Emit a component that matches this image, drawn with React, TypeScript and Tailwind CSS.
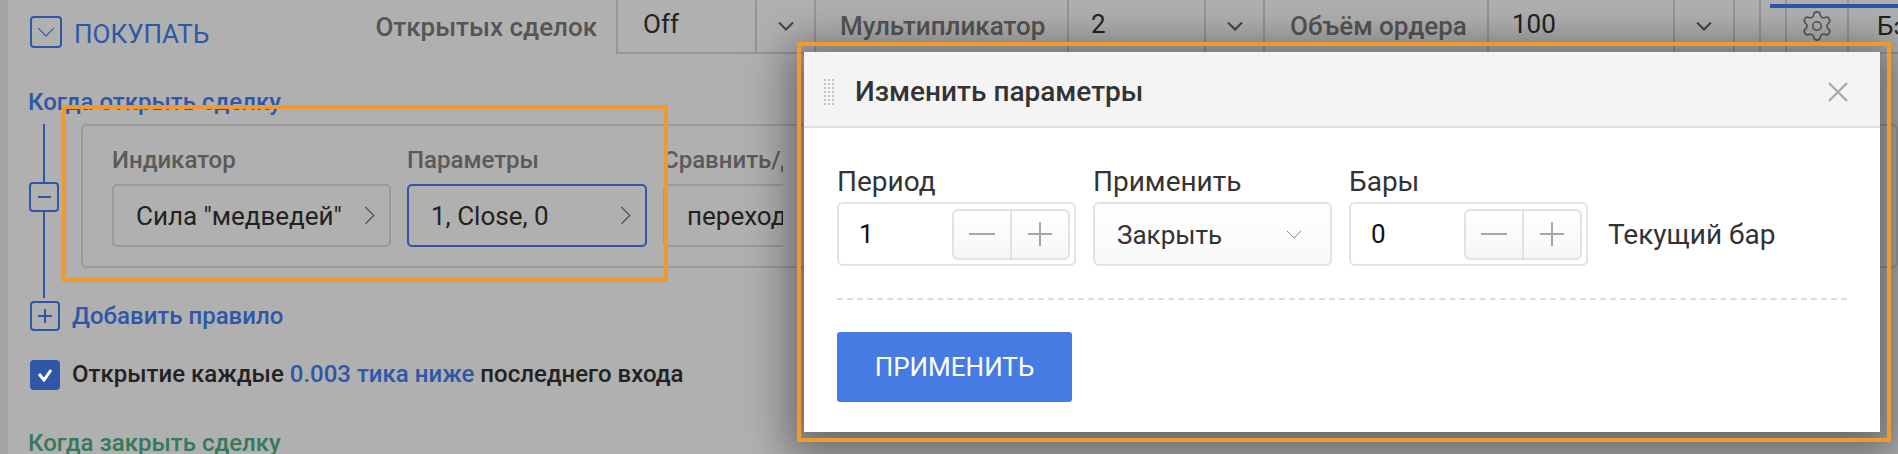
import { Settings } from "lucide-react";

function Chevron({ dir = "down", className }: { dir?: "down" | "right"; className: string }) {
  const d = dir === "down" ? "M1 1l7 7 7-7" : "M1 1l7 7-7 7";
  const box = dir === "down" ? "0 0 16 9" : "0 0 9 16";
  return (
    <svg viewBox={box} fill="none" stroke="currentColor" className={className}>
      <path d={d} />
    </svg>
  );
}

function HeaderCell({ width, border = true, children }: { width: string; border?: boolean; children?: React.ReactNode }) {
  return (
    <div className={`flex h-full shrink-0 items-center ${width} ${border ? "border-l-2 border-[#969696]" : ""}`}>
      {children}
    </div>
  );
}

function HeaderArrow({ width }: { width: string }) {
  return (
    <HeaderCell width={width}>
      <Chevron className="mx-auto h-[10px] w-[16px] stroke-2 text-[#444]" />
    </HeaderCell>
  );
}

function RuleSelect({ width, value, active, arrow = true }: { width: string; value: string; active?: boolean; arrow?: boolean }) {
  return (
    <div
      className={`flex h-[63px] shrink-0 items-center justify-between rounded-[5px] border-2 pl-[22px] pr-[14px] text-[26px] text-[#222] ${width} ${
        active ? "border-[#2e57a8]" : "border-[#9a9a9a]"
      }`}
    >
      <span className="mt-[2px] whitespace-nowrap">{value}</span>
      {arrow && <Chevron dir="right" className="h-[21px] w-[11px] shrink-0 text-[#555]" />}
    </div>
  );
}

function Stepper() {
  return (
    <div className="flex h-[51px] w-[118px] shrink-0 rounded-[6px] border-2 border-[#e2e2e2] bg-gradient-to-b from-white to-[#f6f6f6]">
      <div className="flex flex-1 items-center justify-center border-r-2 border-[#e2e2e2]">
        <div className="h-[2px] w-[26px] bg-[#a6a6a6]" />
      </div>
      <div className="flex flex-1 items-center justify-center">
        <svg viewBox="0 0 24 24" className="h-[24px] w-[24px]" stroke="#a6a6a6" strokeWidth="2">
          <path d="M0 12h24M12 0v24" />
        </svg>
      </div>
    </div>
  );
}

function NumberField({ value }: { value: string }) {
  return (
    <div className="flex h-[64px] w-[239px] items-center justify-between rounded-[6px] border-2 border-[#e2e2e2] pl-[20px] pr-[4px] text-[26px] text-[#111]">
      <span>{value}</span>
      <Stepper />
    </div>
  );
}

function Field({ label, children }: { label: string; children: React.ReactNode }) {
  return (
    <div className="w-[239px] shrink-0">
      <div className="mb-[4px] mt-[-1px] h-[31px] text-[28px] leading-[30px] text-[#333]">{label}</div>
      {children}
    </div>
  );
}

export default function App() {
  return (
    <div className="relative flex h-[454px] w-[1898px] overflow-hidden bg-[#b0b0b0] font-['Roboto',sans-serif]">
      <div className="w-[8px] shrink-0 bg-[#a4a4a4]" />

      <div className="flex min-w-0 flex-1 flex-col">
        {/* top toolbar */}
        <div className="relative flex h-[54px] shrink-0 text-[26px]">
          <div className="flex w-[608px] shrink-0 items-start pl-[22px] pt-[16px]">
            <div className="flex h-[32px] w-[32px] shrink-0 items-center justify-center rounded-[4px] border-2 border-[#2e57a8]">
              <Chevron className="h-[10px] w-[18px] text-[#2e57a8]" />
            </div>
            <span className="ml-[12px] mt-[1px] text-[26px] leading-[34px] text-[#2e57a8]">ПОКУПАТЬ</span>
            <span className="ml-[166px] mt-[-6px] whitespace-nowrap font-medium leading-[34px] text-[#555]">Открытых сделок</span>
          </div>
          <div className="flex h-full shrink-0 border-b-2 border-[#969696]">
            <HeaderCell width="w-[139px]">
              <span className="ml-[25px] mt-[-3px] text-[#222]">Off</span>
            </HeaderCell>
            <HeaderArrow width="w-[59px]" />
            <HeaderCell width="w-[253px]">
              <span className="ml-[24px] whitespace-nowrap font-medium text-[#555]">Мультипликатор</span>
            </HeaderCell>
            <HeaderCell width="w-[137px]">
              <span className="ml-[22px] mt-[-3px] text-[#222]">2</span>
            </HeaderCell>
            <HeaderArrow width="w-[59px]" />
            <HeaderCell width="w-[224px]">
              <span className="ml-[25px] whitespace-nowrap font-medium text-[#555]">Объём ордера</span>
            </HeaderCell>
            <HeaderCell width="w-[186px]">
              <span className="ml-[23px] mt-[-3px] text-[#222]">100</span>
            </HeaderCell>
            <HeaderArrow width="w-[60px]" />
            <HeaderCell width="w-[26px]" />
            <HeaderCell width="w-[26px]" />
            <HeaderCell width="w-[62px]">
              <Settings className="mx-auto h-[34px] w-[34px] text-[#555]" strokeWidth={1.1} />
            </HeaderCell>
            <HeaderCell width="w-[51px]">
              <span className="ml-[28px] whitespace-nowrap text-[#222]">Бэ</span>
            </HeaderCell>
          </div>
          <div className="absolute left-[1762px] right-0 top-[4px] h-[4px] bg-[#2e57a8]" />
        </div>

        {/* entry rules */}
        <div className="pl-[20px] pt-[34px]">
          <div className="text-[24px] font-medium leading-[28px] text-[#2e57a8]">Когда открыть сделку</div>

          <div className="flex">
            <div className="flex w-[32px] shrink-0 flex-col items-center pt-[8px]">
              <div className="h-[58px] w-[2px] bg-[#2e57a8]" />
              <div className="flex h-[30px] w-[30px] shrink-0 items-center justify-center rounded-[4px] border-2 border-[#2e57a8]">
                <div className="h-[2px] w-[13px] bg-[#2e57a8]" />
              </div>
              <div className="h-[86px] w-[2px] bg-[#2e57a8]" />
            </div>
            <div className="ml-[21px] mt-[8px] flex h-[144px] min-w-0 flex-1 gap-[16px] rounded-[5px] border-2 border-[#9a9a9a] pl-[29px]">
              <div className="pt-[19px]">
                <div className="mb-[9px] h-[30px] text-[24px] font-medium leading-[30px] text-[#5a5a5a]">Индикатор</div>
                <RuleSelect width="w-[279px]" value={'Сила "медведей"'} />
              </div>
              <div className="pt-[19px]">
                <div className="mb-[9px] h-[30px] text-[24px] font-medium leading-[30px] text-[#5a5a5a]">Параметры</div>
                <RuleSelect width="w-[240px]" value="1, Close, 0" active />
              </div>
              <div className="w-[120px] shrink-0 overflow-hidden pt-[19px]">
                <div className="mb-[9px] h-[30px] whitespace-nowrap text-[24px] font-medium leading-[30px] text-[#5a5a5a]">Сравнить/Де</div>
                <RuleSelect width="w-[279px]" value="переход" arrow={false} />
              </div>
            </div>
          </div>

          <div className="ml-[2px] flex items-center">
            <div className="flex h-[30px] w-[30px] items-center justify-center rounded-[4px] border-2 border-[#2e57a8]">
              <svg viewBox="0 0 14 14" className="h-[14px] w-[14px]" stroke="#2e57a8" strokeWidth="2">
                <path d="M0 7h14M7 0v14" />
              </svg>
            </div>
            <span className="ml-[12px] text-[24px] font-medium text-[#2e57a8]">Добавить правило</span>
          </div>

          <div className="ml-[2px] mt-[24px] flex items-center">
            <div className="flex h-[30px] w-[30px] items-center justify-center rounded-[4px] bg-[#2e57a8]">
              <svg viewBox="0 0 16 14" className="h-[14px] w-[16px]" fill="none" stroke="#fff" strokeWidth="3">
                <path d="M2 6l5 6 7-10" />
              </svg>
            </div>
            <span className="ml-[12px] mt-[-2px] whitespace-nowrap text-[24px] font-medium text-[#222]">
              Открытие каждые <span className="text-[#2e57a8]">0.003 тика ниже</span> последнего входа
            </span>
          </div>

          <div className="mt-[37px] text-[24px] font-medium leading-[28px] text-[#37795a]">Когда закрыть сделку</div>
        </div>
      </div>

      {/* highlight around the rule being edited */}
      <div className="absolute left-[62px] top-[105px] h-[177px] w-[606px] border-4 border-[#f2992e]" />

      {/* dialog */}
      <div className="absolute left-[804px] top-[52px] flex h-[380px] w-[1076px] flex-col bg-white shadow-[0_8px_40px_16px_rgba(0,0,0,0.4)]">
        <div className="flex h-[76px] shrink-0 items-center border-b-2 border-[#dedede] bg-[#f4f4f4] pl-[20px] pr-[32px] pt-[6px]">
          <svg viewBox="0 0 10 26" className="h-[26px] w-[10px]" fill="#c4c4c4">
            {[0, 4, 8, 12, 16, 20, 24].map((y) => (
              <g key={y}>
                <rect x="0" y={y} width="2" height="2" />
                <rect x="4" y={y} width="2" height="2" />
                <rect x="8" y={y} width="2" height="2" />
              </g>
            ))}
          </svg>
          <span className="ml-[21px] text-[28px] font-medium text-[#333]">Изменить параметры</span>
          <svg viewBox="0 0 20 20" className="ml-auto h-[20px] w-[20px]" stroke="#a3abb2" strokeWidth="2.4">
            <path d="M1 1l18 18M19 1L1 19" />
          </svg>
        </div>

        <div className="mx-[33px] flex flex-1 flex-col">
          <div className="mt-[40px] flex items-end gap-[17px]">
            <Field label="Период">
              <NumberField value="1" />
            </Field>
            <Field label="Применить">
              <div className="flex h-[64px] items-center justify-between rounded-[6px] border-2 border-[#e2e2e2] bg-gradient-to-b from-white to-[#f8f8f8] pl-[22px] pr-[28px] text-[26px] text-[#333]">
                <span className="mt-[3px]">Закрыть</span>
                <Chevron className="h-[9px] w-[16px] text-[#8a8a8a]" />
              </div>
            </Field>
            <Field label="Бары">
              <NumberField value="0" />
            </Field>
            <div className="mb-[16px] ml-[3px] whitespace-nowrap text-[28px] leading-[30px] text-[#333]">Текущий бар</div>
          </div>

          <div className="mt-[32px] border-t-2 border-dashed border-[#dcdcdc]" />

          <button className="mt-[32px] h-[70px] w-[235px] rounded-[3px] bg-[#467be4] text-[26px] text-white">ПРИМЕНИТЬ</button>
        </div>
      </div>
      <div className="absolute left-[797px] top-[42px] h-[400px] w-[1094px] border-4 border-[#f2992e]" />
    </div>
  );
}
